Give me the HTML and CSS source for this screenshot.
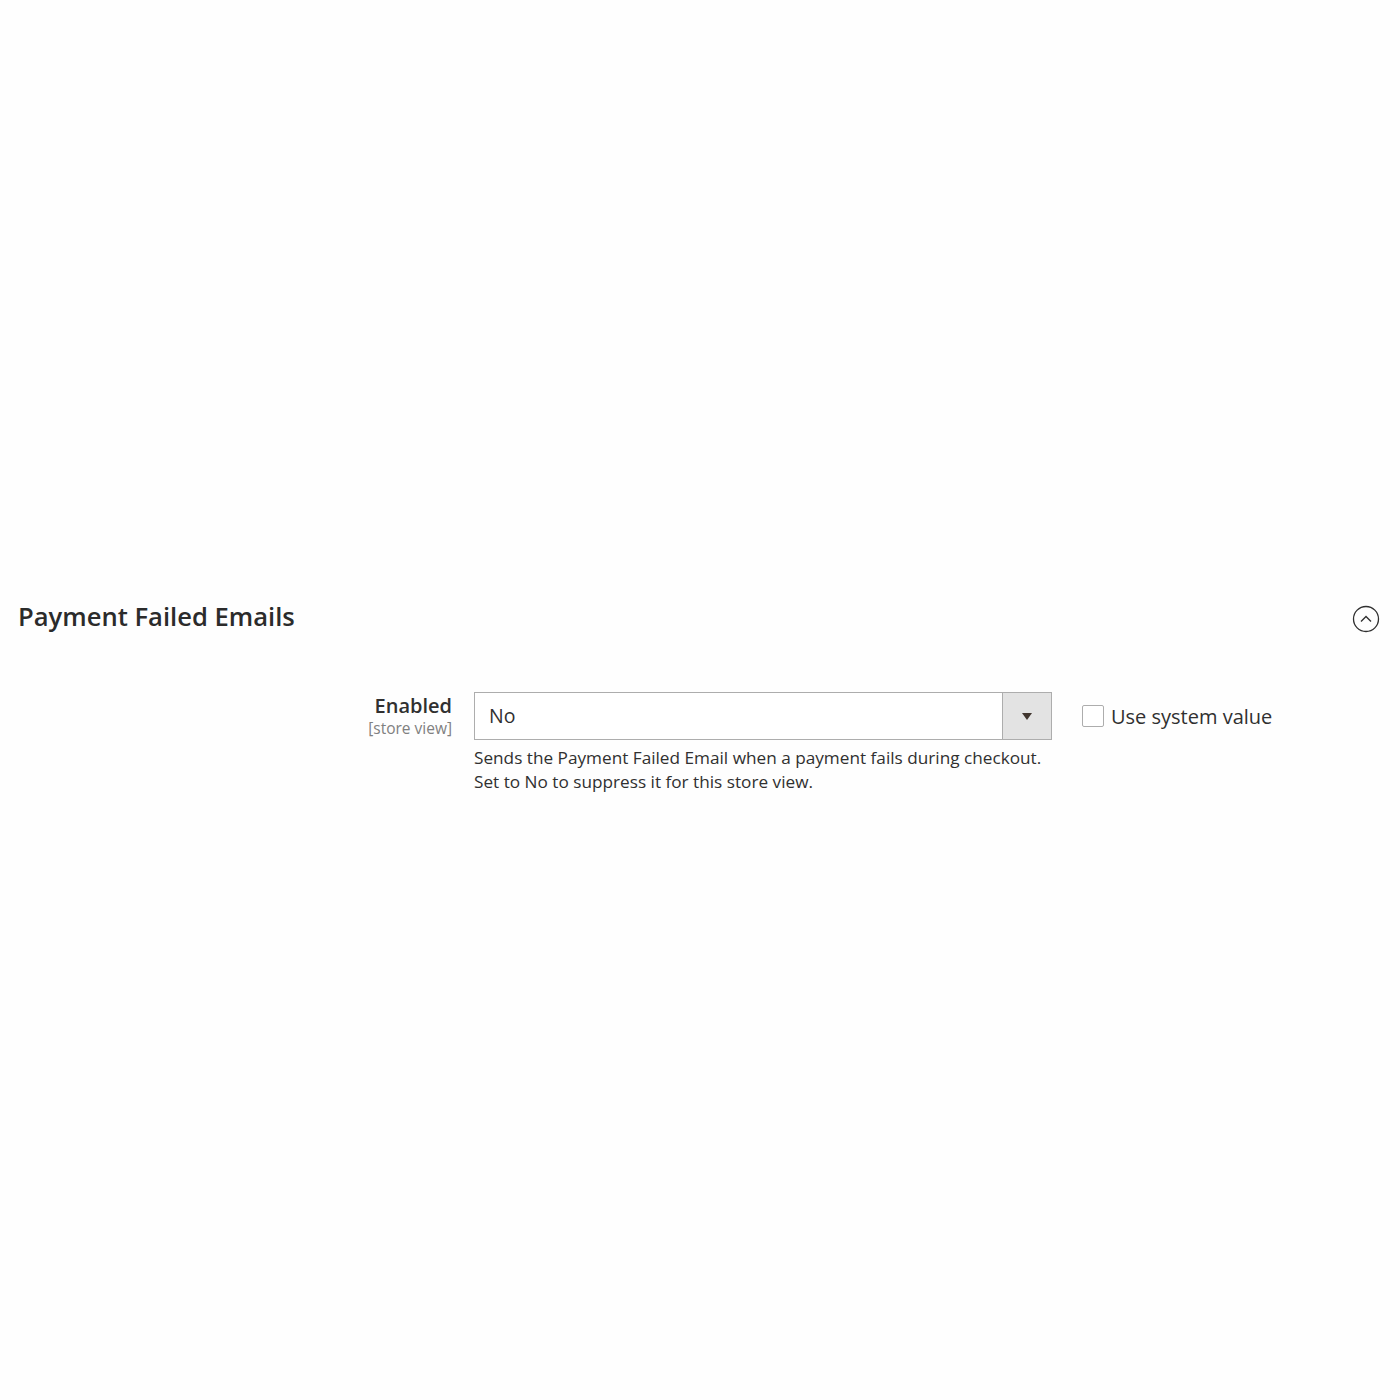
FILE: index.html
```html
<!DOCTYPE html>
<html>
<head>
<meta charset="utf-8">
<link rel="stylesheet" href="styles.css">
</head>
<body>
<div class="page">
  <section class="section">
    <div class="section-head">
      <h2 class="section-title">Payment Failed Emails</h2>
      <span class="collapse-btn">
        <svg width="28" height="28" viewBox="0 0 28 28">
          <circle cx="14" cy="14" r="12.5" fill="none" stroke="#303030" stroke-width="1.3"/>
          <path d="M9 16.5 L14 11.5 L19 16.5" fill="none" stroke="#303030" stroke-width="1.4"/>
        </svg>
      </span>
    </div>
    <div class="field-row">
      <div class="field-label">
        <div class="label-main">Enabled</div>
        <div class="label-scope">[store view]</div>
      </div>
      <div class="field-control">
        <div class="select">
          <span class="select-value">No</span>
          <span class="select-btn"><span class="arrow"></span></span>
        </div>
        <p class="note">Sends the Payment Failed Email when a payment fails during checkout.<br>Set to No to suppress it for this store view.</p>
      </div>
      <label class="use-default">
        <span class="checkbox"></span>
        <span class="use-text">Use system value</span>
      </label>
    </div>
  </section>
</div>
</body>
</html>
```
FILE: styles.css
```css
html, body {
  margin: 0;
  padding: 0;
  background: #fefefe;
  font-family: "Open Sans", "Noto Sans", sans-serif;
  color: #303030;
}
.page {
  height: 1400px;
  padding: 600px 20px 0 18px;
  box-sizing: border-box;
}
.section-head {
  display: flex;
  justify-content: space-between;
  align-items: center;
}
.section-title {
  margin: 0;
  font-size: 25.6px;
  font-weight: 600;
  line-height: 34px;
  color: #2b2b2b;
}
.collapse-btn {
  display: flex;
  margin-top: 4px;
}
.field-row {
  display: flex;
  align-items: flex-start;
  margin-top: 58px;
}
.field-label {
  width: 434px;
  text-align: right;
  margin-top: 1px;
}
.label-main {
  font-size: 20px;
  font-weight: 600;
  line-height: 26px;
  color: #303030;
}
.label-scope {
  font-size: 15.5px;
  line-height: 18px;
  color: #808080;
}
.field-control {
  margin-left: 22px;
  width: 578px;
}
.select {
  display: flex;
  height: 48px;
  border: 1px solid #adadad;
  box-sizing: border-box;
  background: #fff;
}
.select-value {
  flex: 1;
  padding-left: 14px;
  font-size: 19.5px;
  line-height: 46px;
  color: #303030;
}
.select-btn {
  width: 48px;
  border-left: 1px solid #adadad;
  background: #e3e3e3;
  display: flex;
  align-items: center;
  justify-content: center;
}
.arrow {
  width: 0;
  height: 0;
  border-left: 5.5px solid transparent;
  border-right: 5.5px solid transparent;
  border-top: 7px solid #41362f;
}
.note {
  margin: 6px 0 0;
  font-size: 17.2px;
  line-height: 24px;
  color: #303030;
}
.use-default {
  display: flex;
  align-items: center;
  margin-left: 30px;
  height: 48px;
}
.checkbox {
  width: 22px;
  height: 22px;
  border: 1px solid #adadad;
  border-radius: 2px;
  box-sizing: border-box;
  background: #fff;
}
.use-text {
  margin-left: 7px;
  font-size: 20px;
  color: #303030;
}
```
